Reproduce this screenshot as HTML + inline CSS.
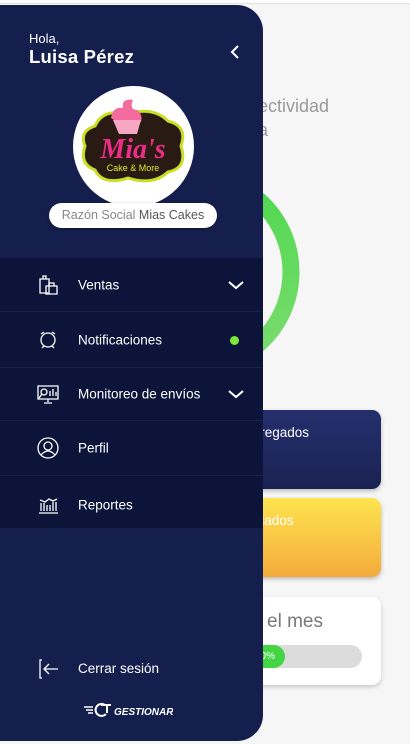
<!DOCTYPE html>
<html><head><meta charset="utf-8"><style>
*{margin:0;padding:0;box-sizing:border-box}
body{width:410px;height:744px;background:#f6f6f6;position:relative;overflow:hidden;font-family:"Liberation Sans",sans-serif}
.topline{position:absolute;left:0;top:0;width:410px;height:4px;background:#fff;border-bottom:1px solid #e2e2e2}
.bg-t{position:absolute;color:#9a9a9a;font-size:18px}
.ring{position:absolute;left:0;top:0}
.card{position:absolute;left:225px;width:156px;border-radius:9px;box-shadow:0 2px 4px rgba(0,0,0,.25)}
.drawer{position:absolute;left:0;top:5px;width:263px;height:736px;background:#141f4d;border-radius:0 26px 26px 0;color:#fff}
.menu{position:absolute;left:0;top:253px;width:263px;height:270px;background:#0c1539}
.row{height:54px;border-bottom:1px solid #18214a;position:relative;font-size:13.5px}
.row span{position:absolute;left:78px;top:50%;transform:translateY(-50%)}
.row svg.ic{position:absolute;left:37px;top:50%;transform:translateY(-50%)}
.chev{position:absolute;left:228px;top:50%;margin-top:-4px}
</style></head><body>
<div class="topline"></div>
<div class="bg-t" style="left:258px;top:96px">ectividad</div>
<div class="bg-t" style="left:258px;top:120px">a</div>
<svg class="ring" width="410" height="744"><defs><linearGradient id="g" x1="0" y1="0" x2="0" y2="1"><stop offset="0" stop-color="#4fd84f"/><stop offset="1" stop-color="#7ddc70"/></linearGradient></defs><circle cx="195" cy="272" r="96" fill="none" stroke="url(#g)" stroke-width="17"/></svg>
<div class="card" style="top:410px;height:79px;background:linear-gradient(#252f6d,#1a2252)"><div style="position:absolute;left:15px;top:15px;color:#fff;font-size:13.5px">Entregados</div></div>
<div class="card" style="top:498px;height:79px;background:linear-gradient(#fee44f,#f4ab3c)"><div style="position:absolute;left:13px;top:15px;color:#fff;font-size:13.5px">Enviados</div></div>
<div class="card" style="top:597px;height:88px;background:#fff;box-shadow:0 2px 4px rgba(0,0,0,.2)"><div style="position:absolute;left:42px;top:14px;color:#777;font-size:19px">el mes</div>
<div style="position:absolute;left:20px;top:48px;width:117px;height:23px;border-radius:12px;background:#dcdcdc"><div style="width:40px;height:23px;border-radius:12px;background:#44d544;color:#fff;font-size:10px;line-height:23px;text-align:right;padding-right:10px">0%</div></div></div>

<div class="drawer">
<div style="position:absolute;left:29px;top:26px;font-size:13px">Hola,</div>
<div style="position:absolute;left:29px;top:41px;font-size:18.5px;font-weight:bold;letter-spacing:0.2px">Luisa Pérez</div>
<svg style="position:absolute;left:229px;top:39px" width="12" height="16"><path d="M9 2 L3 8 L9 14" stroke="#fff" stroke-width="2" fill="none"/></svg>
<div style="position:absolute;left:73px;top:81px;width:121px;height:121px;border-radius:50%;background:#fff"></div>
<svg style="position:absolute;left:73px;top:81px" width="121" height="121">
<path d="M12 60 Q6 45 22 40 Q30 22 55 28 Q80 20 95 35 Q115 40 108 60 Q115 82 95 86 Q80 100 55 92 Q30 100 22 84 Q6 78 12 60Z" fill="#2a1a14" stroke="#c8e024" stroke-width="3"/>
<path d="M38 32 Q40 20 50 22 Q48 12 60 14 Q56 24 64 24 Q70 28 68 36 L44 36Z" fill="#f36a9c"/>
<path d="M40 34 L68 34 L64 48 L46 48Z" fill="#f7a6c4"/>
<text x="60" y="72" text-anchor="middle" font-family="Liberation Serif,serif" font-style="italic" font-weight="bold" font-size="28" fill="#ec2d86">Mia's</text>
<text x="60" y="85" text-anchor="middle" font-size="9" fill="#d8ec30" font-family="Liberation Sans,sans-serif">Cake &amp; More</text>
</svg>
<div style="position:absolute;left:49px;top:198px;width:168px;height:25px;border-radius:13px;background:#fff;color:#888;font-size:12.5px;text-align:center;line-height:25px;box-shadow:0 1px 3px rgba(0,0,0,.3)">Razón Social <span style="color:#555">Mias Cakes</span></div>

<div class="menu">
<div class="row" style="height:54px"><svg class="ic" width="22" height="22" fill="none" stroke="#fff" stroke-width="1.3"><path d="M3 5h9v14H3z"/><path d="M6 5V2h3v3"/><path d="M9 12h11v8H9z"/><path d="M12 12V9h5v3"/></svg><span>Ventas</span><svg class="chev" width="16" height="9"><path d="M1 1l7 6 7-6" stroke="#fff" stroke-width="2" fill="none"/></svg></div>
<div class="row" style="height:56px"><svg class="ic" width="22" height="22" fill="none" stroke="#fff" stroke-width="1.3"><circle cx="11" cy="11" r="7"/><path d="M4 5l3-2M18 5l-3-2M5 19l2-2M17 19l-2-2"/></svg><span>Notificaciones</span><div style="position:absolute;left:230px;top:24px;width:9px;height:9px;border-radius:50%;background:#7ee83a"></div></div>
<div class="row" style="height:53px"><svg class="ic" width="24" height="22" fill="none" stroke="#fff" stroke-width="1.3" style="left:36px"><path d="M2 3h20v13H2z"/><circle cx="8" cy="9" r="3"/><path d="M6 11l-3 4M14 13V8M17 13V6M20 13V9M12 16v3M8 20h8"/></svg><span>Monitoreo de envíos</span><svg class="chev" width="16" height="9"><path d="M1 1l7 6 7-6" stroke="#fff" stroke-width="2" fill="none"/></svg></div>
<div class="row" style="height:55px"><svg class="ic" width="22" height="22" fill="none" stroke="#fff" stroke-width="1.3"><circle cx="11" cy="11" r="10"/><circle cx="11" cy="9" r="4"/><path d="M4 18q7-8 14 0"/></svg><span>Perfil</span></div>
<div class="row" style="border:none;height:57px"><svg class="ic" width="22" height="22" fill="none" stroke="#fff" stroke-width="1.3"><path d="M2 19h19M4 17V9M7 17V9M10 17v-6M13 17v-6M16 17V8M19 17V8M3 6l5 2 4-3 4 2 4-2"/></svg><span>Reportes</span></div>
</div>

<svg style="position:absolute;left:38px;top:654px" width="22" height="20" fill="none" stroke="#fff" stroke-width="1.3"><path d="M4 1H2v18h2"/><path d="M20 10H7M11 5l-5 5 5 5"/></svg>
<div style="position:absolute;left:78px;top:656px;font-size:13.5px">Cerrar sesión</div>
<svg style="position:absolute;left:83px;top:697px" width="90" height="16"><path d="M1 5h9M3 8h7M5 11h5" stroke="#fff" stroke-width="1.4"/><path d="M22 3a6 6 0 1 0 1 9" stroke="#fff" stroke-width="2" fill="none"/><path d="M18 3h10M24 3v8" stroke="#fff" stroke-width="2" fill="none"/><text x="31" y="13" font-family="Liberation Sans,sans-serif" font-weight="bold" font-style="italic" font-size="10" fill="#fff">GESTIONAR</text></svg>
</div>
</body></html>
